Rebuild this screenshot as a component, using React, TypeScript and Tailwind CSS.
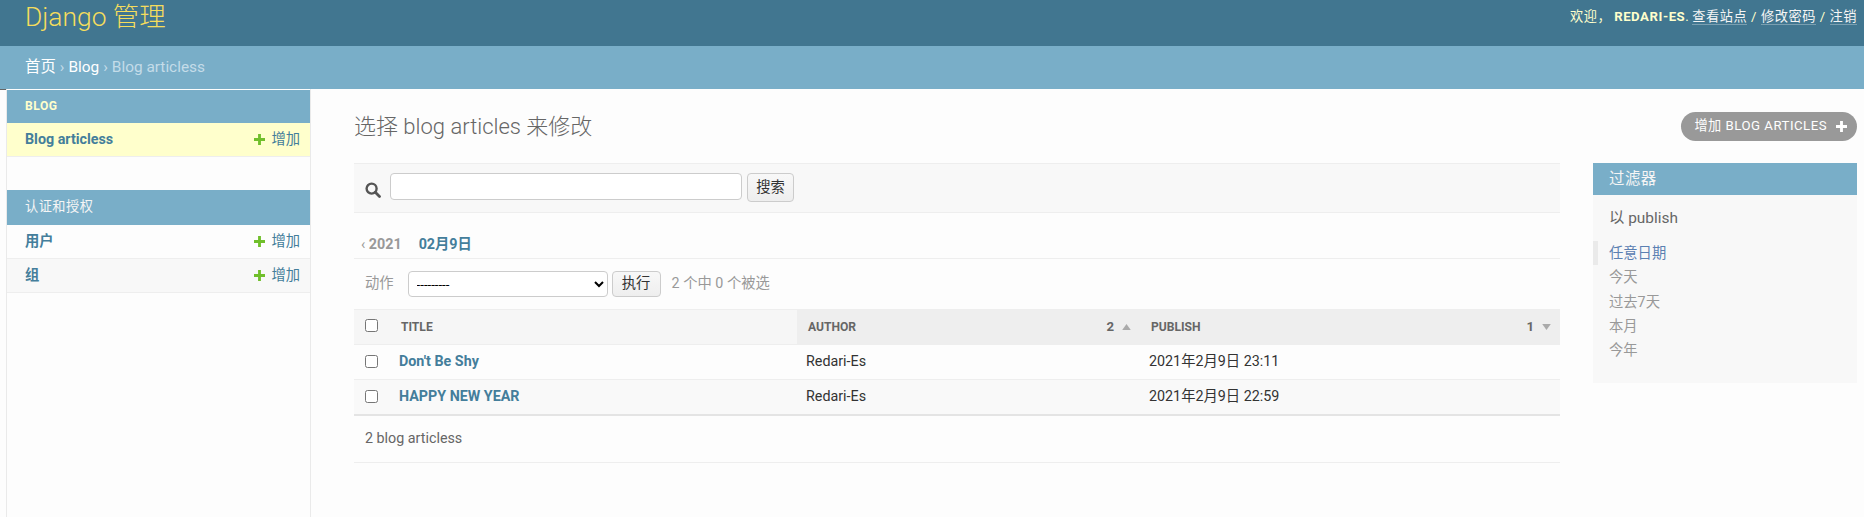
const font = "[font-family:Roboto,'Noto_Sans_CJK_SC',sans-serif]";

const PlusIcon = ({ className }: { className: string }) => (
  <svg viewBox="0 0 10 10" className={className}>
    <path d="M3.7 0h2.6v3.7H10v2.6H6.3V10H3.7V6.3H0V3.7h3.7z" fill="currentColor" />
  </svg>
);

const SidebarRow = ({ name, striped, active }: { name: string; striped?: boolean; active?: boolean }) => (
  <div
    className={`flex h-[34px] items-center justify-between border-b border-[#eeeeee] pl-[18px] pr-[10px] text-[14.3px] ${
      active ? 'bg-[#ffffcc]' : striped ? 'bg-[#f8f8f8]' : ''
    }`}
  >
    <span className="font-bold text-[#447e9b]">{name}</span>
    <span className="flex items-center gap-[6px] text-[#447e9b]">
      <PlusIcon className="h-[11px] w-[11px] text-[#70bf2b]" />
      增加
    </span>
  </div>
);

const Sidebar = () => (
  <div className="flex w-[311px] shrink-0 self-stretch">
    <div className="h-px w-[6px] bg-[#666666]" />
    <div className="min-w-0 flex-1 border-x border-[#eaeaea] pt-px">
      <div className="flex h-[33px] items-center bg-[#79aec8] pl-[18px] text-[12.1px] font-bold tracking-[0.55px] text-[#ffffcc]">
        BLOG
      </div>
      <SidebarRow name="Blog articless" active />
      <div className="h-[33px]" />
      <div className="flex h-[35px] items-center bg-[#79aec8] pl-[18px] pb-[1px] text-[13.2px] tracking-[0.5px] text-[#f5f5f5]">
        认证和授权
      </div>
      <SidebarRow name="用户" />
      <SidebarRow name="组" striped />
    </div>
  </div>
);

const rows = [
  { title: "Don't Be Shy", author: 'Redari-Es', date: '2021年2月9日 23:11', nudge: 'pb-[1px]' },
  { title: 'HAPPY NEW YEAR', author: 'Redari-Es', date: '2021年2月9日 22:59', nudge: 'pb-[0px]' },
];

const Checkbox = () => (
  <input type="checkbox" className="m-0 block h-[13px] w-[13px] appearance-auto" />
);

const ResultTable = () => (
  <table className="w-full table-fixed border-b-2 border-[#e4e4e4] text-[14.3px]">
    <colgroup>
      <col className="w-[443px]" />
      <col className="w-[343px]" />
      <col />
    </colgroup>
    <thead>
      <tr className="h-[35px] border-y border-[#eeeeee] text-left text-[12.1px] font-bold text-[#666666]">
        <th className="bg-[#f6f6f6] pl-[11px]">
          <div className="-mt-[2px] flex items-center">
            <Checkbox />
            <span className="ml-[23px] mt-[2px]">TITLE</span>
          </div>
        </th>
        <th className="bg-[#eeeeee] pl-[11px] pr-[9px]">
          <div className="flex items-center justify-between">
            <span>AUTHOR</span>
            <span className="flex items-center gap-[8px] text-[13.2px]">
              2
              <svg viewBox="0 0 10 7" className="h-[6px] w-[9px] text-[#aaaaaa]">
                <path d="M0 7L5 0l5 7z" fill="currentColor" />
              </svg>
            </span>
          </div>
        </th>
        <th className="bg-[#eeeeee] pl-[11px] pr-[9px]">
          <div className="flex items-center justify-between">
            <span>PUBLISH</span>
            <span className="flex items-center gap-[8px] text-[13.2px]">
              1
              <svg viewBox="0 0 10 7" className="h-[6px] w-[9px] text-[#aaaaaa]">
                <path d="M0 0l5 7 5-7z" fill="currentColor" />
              </svg>
            </span>
          </div>
        </th>
      </tr>
    </thead>
    <tbody>
      {rows.map((row, i) => (
        <tr key={row.title} className={`h-[35px] border-b border-[#eeeeee] ${i === 1 ? 'bg-[#f9f9f9]' : ''}`}>
          <td className={`pl-[11px] ${row.nudge}`}>
            <div className="flex items-center">
              <Checkbox />
              <span className="ml-[21px] font-bold text-[#447e9b]">{row.title}</span>
            </div>
          </td>
          <td className={`pl-[9px] text-[#333333] ${row.nudge}`}>{row.author}</td>
          <td className={`pl-[9px] text-[#333333] ${row.nudge}`}>{row.date}</td>
        </tr>
      ))}
    </tbody>
  </table>
);

const FilterPanel = () => (
  <div className="ml-[33px] h-[220px] w-[264px] shrink-0 bg-[#f8f8f8]">
    <div className="flex h-[32px] items-center bg-[#79aec8] pl-[16px] pt-[1px] text-[15.4px] tracking-[0.5px] text-[#f5f5f5]">过滤器</div>
    <div className="pl-[16px] pt-[12px] text-[15.4px] text-[#666666]">以 publish</div>
    <ul className="mt-[11px] text-[14.3px] leading-[24.2px] text-[#999999]">
      <li className="border-l-[5px] border-[#eaeaea] pl-[11px] text-[#5b80b2]">任意日期</li>
      <li className="pl-[16px]">今天</li>
      <li className="pl-[16px]">过去7天</li>
      <li className="pl-[16px]">本月</li>
      <li className="pl-[16px]">今年</li>
    </ul>
  </div>
);

export default function App() {
  return (
    <div className={`flex min-h-[517px] flex-col overflow-hidden bg-[#fdfdfd] ${font}`}>
      <div className="flex h-[46px] items-start justify-between bg-[#417690] pl-[25px] pr-[7px] text-[#ffffcc]">
        <div className="text-[26.4px] font-light leading-[34px] text-[#f5dd5d]">Django 管理</div>
        <div className="mt-[8px] text-[13.2px] leading-[18px] tracking-[0.55px]">
          欢迎，<span className="ml-[3px] font-bold">REDARI-ES</span>.
          <span className="ml-[3px] border-b border-white/30 text-[#f5f5f5]">查看站点</span> /{' '}
          <span className="border-b border-white/30 text-[#f5f5f5]">修改密码</span> /{' '}
          <span className="border-b border-white/30 text-[#f5f5f5]">注销</span>
        </div>
      </div>
      <div className="flex h-[43px] items-center bg-[#79aec8] pl-[25px] text-[15.4px] text-[#c4dce8]">
        <span className="text-white">首页</span>
        <span className="mx-[4px]">›</span>
        <span className="text-white">Blog</span>
        <span className="mx-[4px]">›</span>
        <span>Blog articless</span>
      </div>
      <div className="flex flex-1 items-start">
        <Sidebar />
        <div className="min-w-0 flex-1 pl-[43px] pr-[7px]">
          <div className="flex h-[74px] items-center justify-between">
            <h1 className="text-[22px] font-light text-[#666666]">选择 blog articles 来修改</h1>
            <div className="flex h-[29px] items-center gap-[9px] rounded-[15px] bg-[#999999] pl-[13px] pr-[10px] text-[13.2px] tracking-[0.5px] text-white">
              增加 BLOG ARTICLES
              <PlusIcon className="h-[11px] w-[11px]" />
            </div>
          </div>
          <div className="flex items-start">
            <div className="min-w-0 flex-1">
              <div className="flex h-[50px] items-start border-y border-[#eeeeee] bg-[#f8f8f8] pl-[11px] pt-[9px]">
                <svg viewBox="0 0 16 16" className="mt-[9px] h-[16px] w-[16px] text-[#555555]">
                  <circle cx="6.6" cy="6.6" r="5" fill="none" stroke="currentColor" strokeWidth="2.4" />
                  <path d="M10.3 10.3L14.5 14.5" stroke="currentColor" strokeWidth="2.8" strokeLinecap="round" />
                </svg>
                <input className="ml-[9px] h-[27px] w-[352px] rounded-[4px] border border-[#cccccc] bg-white" />
                <button className="ml-[5px] h-[29px] w-[47px] rounded-[4px] border border-[#cccccc] bg-gradient-to-b from-[#f8f8f8] to-[#eeeeee] text-[14.3px] text-[#333333]">
                  搜索
                </button>
              </div>
              <div className="flex h-[46px] items-end border-b border-[#eeeeee] pb-[3px] pl-[7px] text-[14.3px] font-bold">
                <span className="text-[#999999]"><span className="font-normal">‹</span> 2021</span>
                <span className="ml-[17px] text-[#447e9b]">02月9日</span>
              </div>
              <div className="flex h-[50px] items-center pl-[11px] text-[14.3px] text-[#999999]">
                <span>动作</span>
                <select className="ml-[14px] h-[26px] w-[200px] appearance-auto rounded-[4px] border border-[#cccccc] bg-white pl-[4px] text-[13.2px] text-black">
                  <option>---------</option>
                </select>
                <button className="ml-[4px] h-[26px] w-[49px] rounded-[4px] border border-[#cccccc] bg-gradient-to-b from-[#f8f8f8] to-[#eeeeee] text-[14.3px] text-[#333333]">
                  执行
                </button>
                <span className="ml-[11px]">2 个中 0 个被选</span>
              </div>
              <ResultTable />
              <div className="flex h-[47px] items-center border-b border-[#eeeeee] pl-[11px] pt-[1px] text-[14.3px] text-[#666666]">
                2 blog articless
              </div>
            </div>
            <FilterPanel />
          </div>
        </div>
      </div>
    </div>
  );
}
